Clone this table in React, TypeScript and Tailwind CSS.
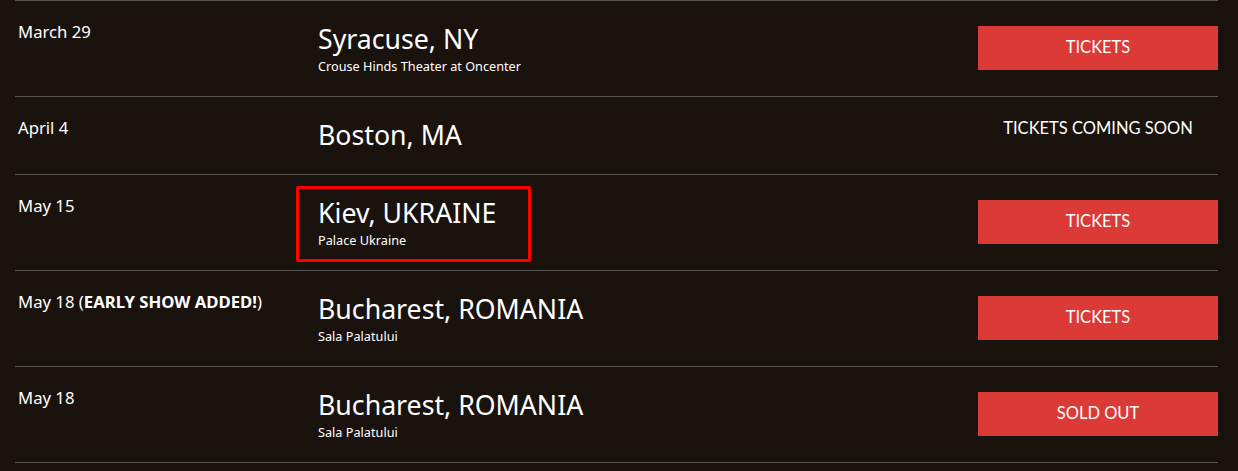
type Show = {
  date: string;
  note?: string;
  city: string;
  venue?: string;
  status: "tickets" | "soon" | "soldout";
  highlight?: boolean;
};

const shows: Show[] = [
  { date: "March 29", city: "Syracuse, NY", venue: "Crouse Hinds Theater at Oncenter", status: "tickets" },
  { date: "April 4", city: "Boston, MA", status: "soon" },
  { date: "May 15", city: "Kiev, UKRAINE", venue: "Palace Ukraine", status: "tickets", highlight: true },
  { date: "May 18", note: "EARLY SHOW ADDED!", city: "Bucharest, ROMANIA", venue: "Sala Palatului", status: "tickets" },
  { date: "May 18", city: "Bucharest, ROMANIA", venue: "Sala Palatului", status: "soldout" },
];

const heading = { fontFamily: '"Noto Sans", sans-serif' };
const btnFont = { fontFamily: 'Lato, sans-serif' };

function ShowRow({ show }: { show: Show }) {
  return (
    <div
      className={`flex items-start border-t border-[#555] pt-[21px] ${
        show.venue ? "h-[96px]" : "h-[78px]"
      }`}
    >
      <div className="w-[303px] pl-[3px] text-[16.7px] leading-[20px] text-white" style={heading}>
        {show.date}
        {show.note && (
          <>
            {" ("}
            <span className="font-bold">{show.note}</span>
            {")"}
          </>
        )}
      </div>

      <div className="relative flex-1" style={heading}>
        <div className="mt-[2px] text-[26.7px] leading-[30px] text-white">{show.city}</div>
        {show.venue && (
          <div className="mt-[4px] text-[12.7px] leading-[16px] text-white">{show.venue}</div>
        )}
        {show.highlight && (
          <div className="pointer-events-none absolute left-[-22px] top-[-10px] h-[76px] w-[235px] rounded-[2px] border-[3px] border-[#f00]" />
        )}
      </div>

      <div className="w-[240px]" style={btnFont}>
        {show.status === "soon" ? (
          <div className="text-center text-[16.5px] leading-[20px] text-white">
            TICKETS COMING SOON
          </div>
        ) : (
          <button className="mt-[4px] flex h-[44px] w-full items-center justify-center bg-[#dc3a37] pb-[2px] text-[16.5px] text-white">
            {show.status === "soldout" ? "SOLD OUT" : "TICKETS"}
          </button>
        )}
      </div>
    </div>
  );
}

export default function App() {
  return (
    <div className="min-h-[471px] w-full bg-[#1a120d]">
      <div className="ml-[15px] w-[1203px] border-b border-[#555]">
        {shows.map((s, i) => (
          <ShowRow key={i} show={s} />
        ))}
      </div>
    </div>
  );
}
